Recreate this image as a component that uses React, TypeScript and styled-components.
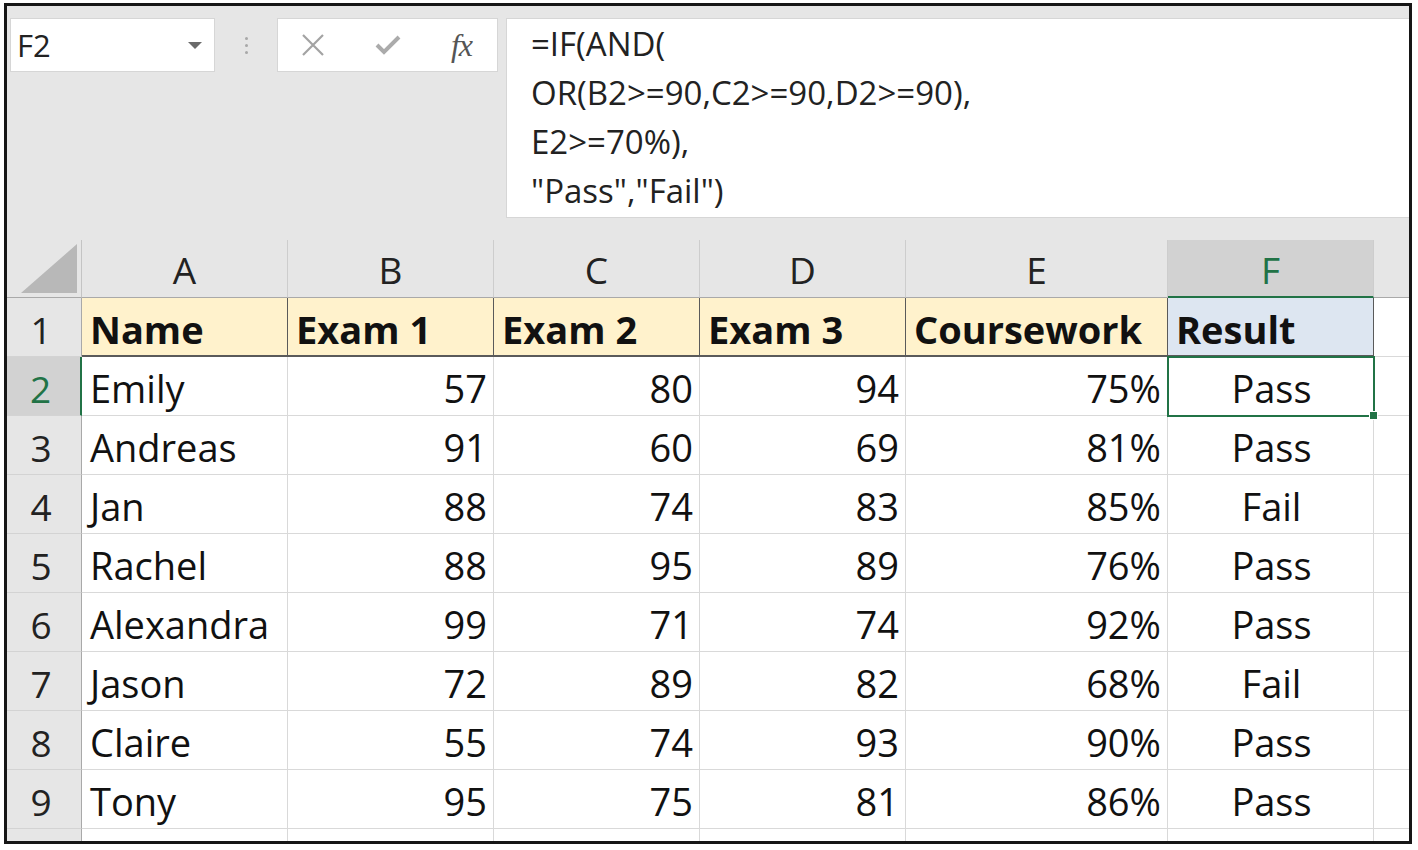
import styled, { createGlobalStyle } from 'styled-components';

const GlobalStyle = createGlobalStyle`
  body {
    margin: 0;
    background: #fff;
  }
`;

const Frame = styled.div`
  box-sizing: border-box;
  margin: 3px 0 0 4px;
  width: 1408px;
  height: 841px;
  border: 3px solid #161616;
  background: #e6e6e6;
  overflow: hidden;
  font-family: "Open Sans", "Noto Sans", sans-serif;
  color: #111;
`;

const Toolbar = styled.div`
  box-sizing: border-box;
  display: flex;
  align-items: flex-start;
  height: 234px;
  padding: 12px 0 0 3px;
`;

const NameBox = styled.div`
  box-sizing: border-box;
  width: 205px;
  height: 54px;
  background: #fff;
  border: 1px solid #d6d6d6;
  display: flex;
  align-items: center;
  justify-content: space-between;
  padding: 0 12px 0 6px;
  font-size: 31px;
  color: #222;
`;

const Caret = styled.span`
  width: 0;
  height: 0;
  border-left: 7px solid transparent;
  border-right: 7px solid transparent;
  border-top: 7px solid #6b6b6b;
`;

const Grip = styled.div`
  width: 62px;
  height: 54px;
  display: flex;
  flex-direction: column;
  align-items: center;
  justify-content: center;
  gap: 4px;
`;

const Dot = styled.span`
  width: 3px;
  height: 3px;
  border-radius: 50%;
  background: #a8a8a8;
`;

const ButtonBox = styled.div`
  box-sizing: border-box;
  width: 221px;
  height: 54px;
  background: #fff;
  border: 1px solid #d6d6d6;
  display: flex;
  align-items: center;
  justify-content: space-between;
  padding: 0 25px 0 22px;
`;

const Fx = styled.span`
  font-family: "Liberation Serif", serif;
  font-style: italic;
  font-size: 32px;
  color: #555;
  letter-spacing: -1px;
`;

const FormulaBox = styled.div`
  box-sizing: border-box;
  flex: 1;
  height: 200px;
  margin-left: 8px;
  background: #fff;
  border: 1px solid #d6d6d6;
  border-right: none;
  padding: 0 0 0 24px;
  font-size: 33px;
  line-height: 49px;
  color: #222;
`;

const FormulaLine = styled.div`
  white-space: pre;
`;

const Grid = styled.div`
  display: grid;
  grid-template-columns: 75px 206px 206px 206px 206px 262px 206px 1fr;
  grid-template-rows: 58px;
  grid-auto-rows: 59px;
`;

const Corner = styled.div`
  box-sizing: border-box;
  display: flex;
  align-items: flex-end;
  justify-content: flex-end;
  padding: 0 4px 4px 0;
  border-right: 1px solid #c4c4c4;
  border-bottom: 1px solid #a9a9a9;

  &::after {
    content: '';
    width: 56px;
    height: 49px;
    background: #b8b8b8;
    clip-path: polygon(100% 0, 100% 100%, 0 100%);
  }
`;

const ColHead = styled.div<{ $active?: boolean }>`
  box-sizing: border-box;
  display: flex;
  align-items: center;
  justify-content: center;
  padding-top: 2px;
  font-size: 37px;
  background: ${(p) => (p.$active ? '#d2d2d2' : '#e6e6e6')};
  color: ${(p) => (p.$active ? '#217346' : '#222')};
  border-right: 1px solid #cdcdcd;
  border-bottom: ${(p) => (p.$active ? '2px solid #217346' : '1px solid #a9a9a9')};
`;

const RowHead = styled.div<{ $active?: boolean }>`
  box-sizing: border-box;
  display: flex;
  align-items: center;
  justify-content: center;
  padding: 4px 6px 0 0;
  font-size: 37px;
  background: ${(p) => (p.$active ? '#d2d2d2' : '#e6e6e6')};
  color: ${(p) => (p.$active ? '#217346' : '#222')};
  border-bottom: 1px solid #d3d3d3;
  border-right: ${(p) => (p.$active ? '2px solid #217346' : '1px solid #a9a9a9')};
`;

type Align = 'left' | 'right' | 'center';

const Cell = styled.div<{ $align: Align; $fill?: string; $header?: boolean; $selected?: boolean }>`
  box-sizing: border-box;
  position: relative;
  display: flex;
  align-items: center;
  justify-content: ${(p) =>
    p.$align === 'right' ? 'flex-end' : p.$align === 'center' ? 'center' : 'flex-start'};
  padding: 4px 6px 0 8px;
  font-size: 38px;
  font-weight: ${(p) => (p.$header ? 700 : 400)};
  background: ${(p) => p.$fill ?? '#fff'};
  border-right: 1px solid ${(p) => (p.$header ? '#5a5a5a' : '#d9d9d9')};
  border-bottom: ${(p) => (p.$header ? '2px solid #5a5a5a' : '1px solid #d9d9d9')};
  outline: ${(p) => (p.$selected ? '2px solid #217346' : 'none')};
  outline-offset: -1px;
  z-index: ${(p) => (p.$selected ? 1 : 0)};
`;

const Handle = styled.span`
  position: absolute;
  right: -5px;
  bottom: -5px;
  width: 7px;
  height: 7px;
  background: #217346;
  border: 1px solid #fff;
`;

const Blank = styled.div<{ $head?: boolean }>`
  box-sizing: border-box;
  background: ${(p) => (p.$head ? '#e6e6e6' : '#fff')};
  border-bottom: 1px solid ${(p) => (p.$head ? '#a9a9a9' : '#d9d9d9')};
`;

const columns = ['A', 'B', 'C', 'D', 'E', 'F'];
const headers = ['Name', 'Exam 1', 'Exam 2', 'Exam 3', 'Coursework', 'Result'];

type RowData = [string, number, number, number, string, string];

const rows: RowData[] = [
  ['Emily', 57, 80, 94, '75%', 'Pass'],
  ['Andreas', 91, 60, 69, '81%', 'Pass'],
  ['Jan', 88, 74, 83, '85%', 'Fail'],
  ['Rachel', 88, 95, 89, '76%', 'Pass'],
  ['Alexandra', 99, 71, 74, '92%', 'Pass'],
  ['Jason', 72, 89, 82, '68%', 'Fail'],
  ['Claire', 55, 74, 93, '90%', 'Pass'],
  ['Tony', 95, 75, 81, '86%', 'Pass'],
];

const formula = ['=IF(AND(', 'OR(B2>=90,C2>=90,D2>=90),', 'E2>=70%),', '"Pass","Fail")'];

const CrossIcon = () => (
  <svg width="26" height="26" viewBox="0 0 26 26">
    <path d="M3 3 L23 23 M23 3 L3 23" stroke="#a3a3a3" strokeWidth="2.2" fill="none" />
  </svg>
);

const CheckIcon = () => (
  <svg width="28" height="24" viewBox="0 0 28 24">
    <path d="M3 12 L10 19 L25 4" stroke="#ababab" strokeWidth="4" fill="none" />
  </svg>
);

function Row({ n, data }: { n: number; data: RowData }) {
  const selected = n === 2;
  return (
    <>
      <RowHead $active={selected}>{n}</RowHead>
      <Cell $align="left">{data[0]}</Cell>
      <Cell $align="right">{data[1]}</Cell>
      <Cell $align="right">{data[2]}</Cell>
      <Cell $align="right">{data[3]}</Cell>
      <Cell $align="right">{data[4]}</Cell>
      <Cell $align="center" $selected={selected}>
        {data[5]}
        {selected && <Handle />}
      </Cell>
      <Blank />
    </>
  );
}

export default function App() {
  return (
    <>
      <GlobalStyle />
      <Frame>
        <Toolbar>
          <NameBox>
            F2
            <Caret />
          </NameBox>
          <Grip>
            <Dot />
            <Dot />
            <Dot />
          </Grip>
          <ButtonBox>
            <CrossIcon />
            <CheckIcon />
            <Fx>fx</Fx>
          </ButtonBox>
          <FormulaBox>
            {formula.map((line) => (
              <FormulaLine key={line}>{line}</FormulaLine>
            ))}
          </FormulaBox>
        </Toolbar>

        <Grid>
          <Corner />
          {columns.map((c) => (
            <ColHead key={c} $active={c === 'F'}>
              {c}
            </ColHead>
          ))}
          <Blank $head />

          <RowHead>1</RowHead>
          {headers.map((h, i) => (
            <Cell key={h} $align="left" $header $fill={i === 5 ? '#dde6f1' : '#fff2cc'}>
              {h}
            </Cell>
          ))}
          <Blank />

          {rows.map((r, i) => (
            <Row key={r[0]} n={i + 2} data={r} />
          ))}

          <RowHead />
          {columns.map((c) => (
            <Cell key={c} $align="left" />
          ))}
          <Blank />
        </Grid>
      </Frame>
    </>
  );
}
